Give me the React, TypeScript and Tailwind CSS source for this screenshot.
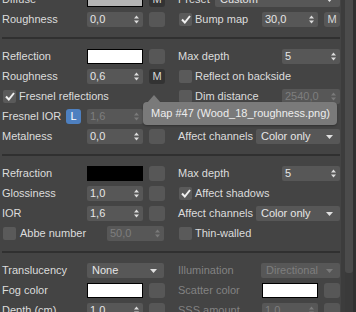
import type { ReactNode } from "react";

const font = { fontFamily: '"Liberation Sans", Arial, sans-serif' };

function Spinner({ dim }: { dim?: boolean }) {
  return (
    <svg width="5" height="9" viewBox="0 0 5 9" className="ml-auto mr-[4px]">
      <path d="M0 3.5 L2.5 0.5 L5 3.5 Z M0 5.5 L2.5 8.5 L5 5.5 Z" fill={dim ? "#7a7a7a" : "#dcdcdc"} />
    </svg>
  );
}

function Arrow({ dim }: { dim?: boolean }) {
  return (
    <svg width="7" height="4" viewBox="0 0 7 4" className="ml-auto mr-[7px]">
      <path d="M0 0 L7 0 L3.5 4 Z" fill={dim ? "#7a7a7a" : "#e0e0e0"} />
    </svg>
  );
}

function Field({ value, w = "w-[56px]", dim }: { value: string; w?: string; dim?: boolean }) {
  return (
    <div
      className={`flex h-[15px] ${w} items-center rounded-[2px] bg-[#575757] pl-[3px] ${
        dim ? "text-[#7e7e7e]" : "text-[#e6e6e6]"
      }`}
    >
      <span>{value}</span>
      <Spinner dim={dim} />
    </div>
  );
}

function Drop({ value, w, dim }: { value: string; w: string; dim?: boolean }) {
  return (
    <div
      className={`flex h-[15px] ${w} items-center rounded-[2px] bg-[#575757] pl-[5px] ${
        dim ? "text-[#7e7e7e]" : "text-[#e6e6e6]"
      }`}
    >
      <span>{value}</span>
      <Arrow dim={dim} />
    </div>
  );
}

function Swatch({ color }: { color: string }) {
  return <div className={`h-[15px] w-[56px] border border-black ${color}`} />;
}

function Sq({ m, dark }: { m?: boolean; dark?: boolean }) {
  return (
    <div
      className={`ml-[6px] flex h-[15px] w-[16px] items-center justify-center rounded-[3px] text-[11px] ${
        dark ? "bg-[#333333] text-[#d8d8d8]" : "bg-[#575757] text-[#d8d8d8]"
      }`}
    >
      {m ? "M" : null}
    </div>
  );
}

function Check({ on }: { on?: boolean }) {
  return (
    <div className="flex h-[13px] w-[13px] shrink-0 items-center justify-center rounded-[2px] bg-[#5a5a5a]">
      {on && (
        <svg width="10" height="9" viewBox="0 0 10 9">
          <path d="M1 4.5 L3.8 7.5 L9 1" stroke="#f0f0f0" strokeWidth="2" fill="none" />
        </svg>
      )}
    </div>
  );
}

function Row({ left, right }: { left: ReactNode; right?: ReactNode }) {
  return (
    <div className="flex h-[15px] items-center">
      <div className="flex w-[176px] items-center pl-[2px]">{left}</div>
      <div className="flex w-[164px] items-center pl-[2px]">{right}</div>
    </div>
  );
}

function Label({ children, w = "w-[85px]", dim }: { children: ReactNode; w?: string; dim?: boolean }) {
  return <span className={`${w} whitespace-nowrap ${dim ? "text-[#828282]" : "text-[#dcdcdc]"}`}>{children}</span>;
}

function RLabel({ children, dim }: { children: ReactNode; dim?: boolean }) {
  return <span className={`flex-1 whitespace-nowrap ${dim ? "text-[#828282]" : "text-[#dcdcdc]"}`}>{children}</span>;
}

function CheckLabel({ on, children, gap = "ml-[3px]" }: { on?: boolean; children: ReactNode; gap?: string }) {
  return (
    <div className="flex items-center pl-[1px]">
      <Check on={on} />
      <span className={`${gap} whitespace-nowrap text-[#dcdcdc]`}>{children}</span>
    </div>
  );
}

function Section({ children }: { children: ReactNode }) {
  return <div className="flex flex-col gap-[5px] py-[10px]">{children}</div>;
}

function Sep() {
  return <div className="ml-[2px] h-[2px] w-[338px] bg-[#303030]" />;
}

export default function App() {
  return (
    <div className="flex h-[312px] w-[356px] overflow-hidden bg-[#444444] text-[11px] leading-none" style={font}>
      <div className="relative w-[341px]">
        <div className="-mt-[18px] flex flex-col">
          <Section>
            <Row
              left={
                <>
                  <Label>Diffuse</Label>
                  <Swatch color="bg-[#b5b5b5]" />
                  <Sq m dark />
                </>
              }
              right={
                <>
                  <RLabel>Preset</RLabel>
                  <Drop value="Custom" w="w-[125px]" />
                </>
              }
            />
            <Row
              left={
                <>
                  <Label>Roughness</Label>
                  <Field value="0,0" />
                  <Sq />
                </>
              }
              right={
                <>
                  <div className="flex-1">
                    <CheckLabel on>Bump map</CheckLabel>
                  </div>
                  <Field value="30,0" />
                  <Sq m />
                </>
              }
            />
          </Section>
          <Sep />
          <Section>
            <Row
              left={
                <>
                  <Label>Reflection</Label>
                  <Swatch color="bg-white" />
                  <Sq />
                </>
              }
              right={
                <>
                  <RLabel>Max depth</RLabel>
                  <Field value="5" w="w-[58px]" />
                </>
              }
            />
            <Row
              left={
                <>
                  <Label>Roughness</Label>
                  <Field value="0,6" />
                  <Sq m dark />
                </>
              }
              right={<CheckLabel>Reflect on backside</CheckLabel>}
            />
            <Row
              left={<CheckLabel on>Fresnel reflections</CheckLabel>}
              right={
                <>
                  <div className="flex-1">
                    <CheckLabel>Dim distance</CheckLabel>
                  </div>
                  <Field value="2540,0" w="w-[58px]" dim />
                </>
              }
            />
            <Row
              left={
                <>
                  <Label w="w-[64px]">Fresnel IOR</Label>
                  <div className="flex h-[15px] w-[15px] items-center justify-center rounded-[3px] bg-[#4e80c0] text-[11px] text-white">
                    L
                  </div>
                  <div className="w-[6px]" />
                  <Field value="1,6" dim />
                </>
              }
            />
            <Row
              left={
                <>
                  <Label>Metalness</Label>
                  <Field value="0,0" />
                  <Sq />
                </>
              }
              right={
                <>
                  <RLabel>Affect channels</RLabel>
                  <Drop value="Color only" w="w-[84px]" />
                </>
              }
            />
          </Section>
          <Sep />
          <Section>
            <Row
              left={
                <>
                  <Label>Refraction</Label>
                  <Swatch color="bg-black" />
                  <Sq />
                </>
              }
              right={
                <>
                  <RLabel>Max depth</RLabel>
                  <Field value="5" w="w-[58px]" />
                </>
              }
            />
            <Row
              left={
                <>
                  <Label>Glossiness</Label>
                  <Field value="1,0" />
                  <Sq />
                </>
              }
              right={<CheckLabel on>Affect shadows</CheckLabel>}
            />
            <Row
              left={
                <>
                  <Label>IOR</Label>
                  <Field value="1,6" />
                  <Sq />
                </>
              }
              right={
                <>
                  <RLabel>Affect channels</RLabel>
                  <Drop value="Color only" w="w-[84px]" />
                </>
              }
            />
            <Row
              left={
                <>
                  <div className="w-[105px]">
                    <CheckLabel gap="ml-[4px]">Abbe number</CheckLabel>
                  </div>
                  <Field value="50,0" w="w-[57px]" dim />
                </>
              }
              right={<CheckLabel>Thin-walled</CheckLabel>}
            />
          </Section>
          <Sep />
          <Section>
            <Row
              left={
                <>
                  <Label>Translucency</Label>
                  <Drop value="None" w="w-[77px]" />
                </>
              }
              right={
                <>
                  <RLabel dim>Illumination</RLabel>
                  <Drop value="Directional" w="w-[79px]" dim />
                </>
              }
            />
            <Row
              left={
                <>
                  <Label>Fog color</Label>
                  <Swatch color="bg-white" />
                  <Sq />
                </>
              }
              right={
                <>
                  <RLabel dim>Scatter color</RLabel>
                  <Swatch color="bg-white" />
                  <Sq />
                </>
              }
            />
            <Row
              left={
                <>
                  <Label>Depth (cm)</Label>
                  <Field value="1,0" />
                  <Sq />
                </>
              }
              right={
                <>
                  <RLabel dim>SSS amount</RLabel>
                  <Field value="1,0" dim />
                  <Sq />
                </>
              }
            />
          </Section>
        </div>

        <div className="absolute left-[143px] top-[102px] flex h-[23px] w-[194px] items-center rounded-[4px] bg-[#7a7a7a] pl-[8px] text-[#ededed] shadow-[0_1px_2px_rgba(0,0,0,0.3)]">
          Map #47 (Wood_18_roughness.png)
        </div>
        <svg className="absolute left-[147px] top-[94px]" width="14" height="9" viewBox="0 0 14 9">
          <path d="M0 9 L7 1 L14 9 Z" fill="#7a7a7a" />
        </svg>
      </div>
      <div className="flex w-[15px]">
        <div className="w-[4px] bg-[#3c3c3c]" />
        <div className="flex w-[8px] flex-col bg-[#3a3a3a]">
          <div className="h-[273px] rounded-b-[3px] bg-[#4b4b4b]" />
        </div>
        <div className="w-[3px] bg-[#303030]" />
      </div>
    </div>
  );
}
